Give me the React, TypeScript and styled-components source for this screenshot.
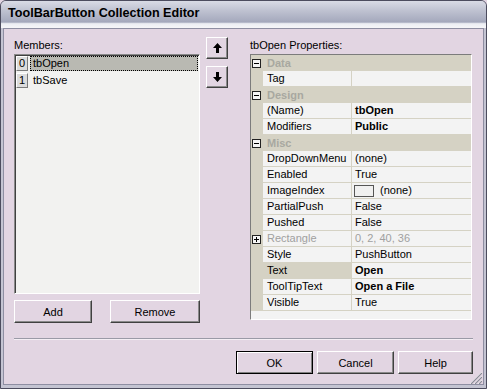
import React from 'react';
import styled, { createGlobalStyle } from 'styled-components';

const bodyBg = '#e2d5e2';
const gridLine = '#d5d2c4';
const cellBg = '#f3f3f3';

const GlobalStyle = createGlobalStyle`
  html, body {
    margin: 0;
    padding: 0;
    background: ${bodyBg};
  }
  body {
    font-family: "Liberation Sans", Arial, sans-serif;
    font-size: 11px;
    color: #000;
  }
`;

const Window = styled.div`
  position: relative;
  width: 487px;
  height: 389px;
  box-sizing: border-box;
  display: flex;
  flex-direction: column;
  background: #c4c4d2;
  border: 1px solid #4c4c5e;
  border-radius: 6px 6px 0 0;
  overflow: hidden;
`;

const TitleBar = styled.div`
  height: 27px;
  flex: none;
  display: flex;
  align-items: center;
  padding: 0 0 3px 7px;
  box-sizing: border-box;
  background: linear-gradient(
    to bottom,
    #d9dbe5 0%,
    #bfc2d1 35%,
    #a9adc0 70%,
    #a3a7bb 78%,
    #eceef3 84%,
    #f6f6f9 100%
  );
  font-size: 12.6px;
  font-weight: bold;
`;

const Body = styled.div`
  flex: 1;
  display: flex;
  flex-direction: column;
  margin: 0 2px 3px 2px;
  border: 1px solid #8e8ea2;
  background: ${bodyBg};
  padding: 9px 10px 0 10px;
`;

const Main = styled.div`
  display: flex;
  align-items: flex-start;
`;

const LeftPanel = styled.div`
  width: 186px;
  display: flex;
  flex-direction: column;
`;

const Label = styled.div<{ $gap?: number }>`
  height: 14px;
  line-height: 14px;
  margin-bottom: ${(p) => p.$gap ?? 2}px;
`;

const ListBox = styled.div`
  height: 240px;
  box-sizing: border-box;
  background: #f2f2f0;
  border: 1px solid;
  border-color: #8a8a8a #ffffff #ffffff #8a8a8a;
  box-shadow: inset 1px 1px 0 #404040;
  padding: 1px 1px 0 1px;
`;

const ListRow = styled.div`
  display: flex;
  height: 16px;
  margin-bottom: 1px;
`;

const IndexCell = styled.div`
  width: 12px;
  height: 15px;
  box-sizing: border-box;
  background: #dcdcdc;
  border: 1px solid;
  border-color: #ffffff #7a7a7a #7a7a7a #ffffff;
  text-align: center;
  line-height: 13px;
  margin-right: 2px;
`;

const ItemText = styled.div<{ $selected?: boolean }>`
  flex: 1;
  height: 15px;
  box-sizing: border-box;
  line-height: 13px;
  padding-left: 2px;
  background: ${(p) => (p.$selected ? '#b9b9b2' : 'transparent')};
  border: 1px ${(p) => (p.$selected ? 'dotted #000' : 'solid transparent')};
`;

const ButtonRow = styled.div`
  display: flex;
  justify-content: space-between;
  margin-top: 6px;
`;

const Button = styled.button<{ $w: number; $default?: boolean }>`
  width: ${(p) => p.$w}px;
  height: 23px;
  box-sizing: border-box;
  padding: 0;
  font-family: "Liberation Sans", Arial, sans-serif;
  font-size: 11px;
  color: #000;
  background: ${bodyBg};
  border: 1px solid;
  border-color: ${(p) =>
    p.$default ? '#000 #000 #000 #000' : '#ffffff #404040 #404040 #ffffff'};
  box-shadow: ${(p) =>
    p.$default
      ? 'inset 1px 1px 0 #ffffff, inset -1px -1px 0 #808080'
      : 'inset -1px -1px 0 #8a8a8a'};
  display: flex;
  align-items: center;
  justify-content: center;
`;

const ArrowCol = styled.div`
  display: flex;
  flex-direction: column;
  gap: 7px;
  margin: -1px 22px 0 6px;
`;

const ArrowButton = styled(Button)`
  height: 22px;
`;

const RightPanel = styled.div`
  width: 222px;
  display: flex;
  flex-direction: column;
`;

const Grid = styled.div`
  height: 266px;
  box-sizing: border-box;
  background: ${cellBg};
  border: 1px solid;
  border-color: #7c7c7c #ffffff #ffffff #7c7c7c;
  display: flex;
  flex-direction: column;
`;

const Row = styled.div`
  display: grid;
  grid-template-columns: 12px 89px 1fr;
  height: 16px;
  box-sizing: border-box;
`;

const Gutter = styled.div`
  background: ${gridLine};
  display: flex;
  align-items: center;
  padding-left: 1px;
`;

const CategoryText = styled.div`
  grid-column: 2 / 4;
  background: ${gridLine};
  color: #a8a8a0;
  font-weight: bold;
  line-height: 16px;
  padding-left: 4px;
`;

const NameCell = styled.div<{ $selected?: boolean; $dim?: boolean }>`
  background: ${(p) => (p.$selected ? gridLine : cellBg)};
  color: ${(p) => (p.$dim ? '#a0a0a0' : '#000')};
  border-bottom: 1px solid ${gridLine};
  border-right: 1px solid ${gridLine};
  line-height: 15px;
  padding-left: 4px;
  white-space: nowrap;
  overflow: hidden;
`;

const ValueCell = styled.div<{ $bold?: boolean; $dim?: boolean }>`
  background: ${cellBg};
  color: ${(p) => (p.$dim ? '#a0a0a0' : '#000')};
  font-weight: ${(p) => (p.$bold ? 'bold' : 'normal')};
  border-bottom: 1px solid ${gridLine};
  line-height: 15px;
  padding-left: 3px;
  display: flex;
  align-items: center;
  white-space: nowrap;
`;

const Swatch = styled.span`
  width: 20px;
  height: 12px;
  box-sizing: border-box;
  border: 1px solid #555;
  background: #f0f0f0;
  margin: 0 6px 0 -1px;
`;

const Expander = styled.span`
  width: 9px;
  height: 9px;
  box-sizing: border-box;
  border: 1px solid #222;
  background: #f6f6f6;
  position: relative;
  &::before {
    content: '';
    position: absolute;
    left: 1px;
    right: 1px;
    top: 3px;
    height: 1px;
    background: #000;
  }
`;

const ExpanderPlus = styled(Expander)`
  &::after {
    content: '';
    position: absolute;
    top: 1px;
    bottom: 1px;
    left: 3px;
    width: 1px;
    background: #000;
  }
`;

const Separator = styled.div`
  margin-top: 15px;
  height: 1px;
  background: #9a9aa6;
  border-bottom: 1px solid #f4eef4;
`;

const Footer = styled.div`
  display: flex;
  justify-content: flex-end;
  gap: 4px;
  margin-top: 11px;
`;

const Grip = styled.svg`
  position: absolute;
  right: 4px;
  bottom: 4px;
`;

const UpArrow = () => (
  <svg width="9" height="10" viewBox="0 0 9 10">
    <polygon points="4.5,0 9,5 6,5 6,10 3,10 3,5 0,5" fill="#000" />
  </svg>
);

const DownArrow = () => (
  <svg width="9" height="10" viewBox="0 0 9 10">
    <polygon points="3,0 6,0 6,5 9,5 4.5,10 0,5 3,5" fill="#000" />
  </svg>
);

type Prop = {
  name: string;
  value: string;
  bold?: boolean;
  dim?: boolean;
  selected?: boolean;
  swatch?: boolean;
  expandable?: boolean;
};

type Section = { title: string; props: Prop[] };

const sections: Section[] = [
  { title: 'Data', props: [{ name: 'Tag', value: '' }] },
  {
    title: 'Design',
    props: [
      { name: '(Name)', value: 'tbOpen', bold: true },
      { name: 'Modifiers', value: 'Public', bold: true },
    ],
  },
  {
    title: 'Misc',
    props: [
      { name: 'DropDownMenu', value: '(none)' },
      { name: 'Enabled', value: 'True' },
      { name: 'ImageIndex', value: '(none)', swatch: true },
      { name: 'PartialPush', value: 'False' },
      { name: 'Pushed', value: 'False' },
      { name: 'Rectangle', value: '0, 2, 40, 36', dim: true, expandable: true },
      { name: 'Style', value: 'PushButton' },
      { name: 'Text', value: 'Open', bold: true, selected: true },
      { name: 'ToolTipText', value: 'Open a File', bold: true },
      { name: 'Visible', value: 'True' },
    ],
  },
];

const members = ['tbOpen', 'tbSave'];

export default function App() {
  return (
    <>
      <GlobalStyle />
      <Window>
        <TitleBar>ToolBarButton Collection Editor</TitleBar>
        <Body>
          <Main>
            <LeftPanel>
              <Label>Members:</Label>
              <ListBox>
                {members.map((m, i) => (
                  <ListRow key={m}>
                    <IndexCell>{i}</IndexCell>
                    <ItemText $selected={i === 0}>{m}</ItemText>
                  </ListRow>
                ))}
              </ListBox>
              <ButtonRow>
                <Button $w={78}>Add</Button>
                <Button $w={90}>Remove</Button>
              </ButtonRow>
            </LeftPanel>
            <ArrowCol>
              <ArrowButton $w={22}>
                <UpArrow />
              </ArrowButton>
              <ArrowButton $w={22}>
                <DownArrow />
              </ArrowButton>
            </ArrowCol>
            <RightPanel>
              <Label $gap={2}>tbOpen Properties:</Label>
              <Grid>
                {sections.map((s) => (
                  <React.Fragment key={s.title}>
                    <Row>
                      <Gutter>
                        <Expander />
                      </Gutter>
                      <CategoryText>{s.title}</CategoryText>
                    </Row>
                    {s.props.map((p) => (
                      <Row key={p.name}>
                        <Gutter>{p.expandable && <ExpanderPlus />}</Gutter>
                        <NameCell $selected={p.selected} $dim={p.dim}>
                          {p.name}
                        </NameCell>
                        <ValueCell $bold={p.bold} $dim={p.dim}>
                          {p.swatch && <Swatch />}
                          {p.value}
                        </ValueCell>
                      </Row>
                    ))}
                  </React.Fragment>
                ))}
              </Grid>
            </RightPanel>
          </Main>
          <Separator />
          <Footer>
            <Button $w={77} $default>
              OK
            </Button>
            <Button $w={77}>Cancel</Button>
            <Button $w={75}>Help</Button>
          </Footer>
        </Body>
        <Grip width="12" height="12" viewBox="0 0 12 12">
          {[0, 4, 8].map((o) => (
            <g key={o}>
              <line x1={12} y1={o} x2={o} y2={12} stroke="#ffffff" strokeWidth="1" />
              <line x1={12} y1={o + 1} x2={o + 1} y2={12} stroke="#8a8a96" strokeWidth="1.2" />
            </g>
          ))}
        </Grip>
      </Window>
    </>
  );
}
